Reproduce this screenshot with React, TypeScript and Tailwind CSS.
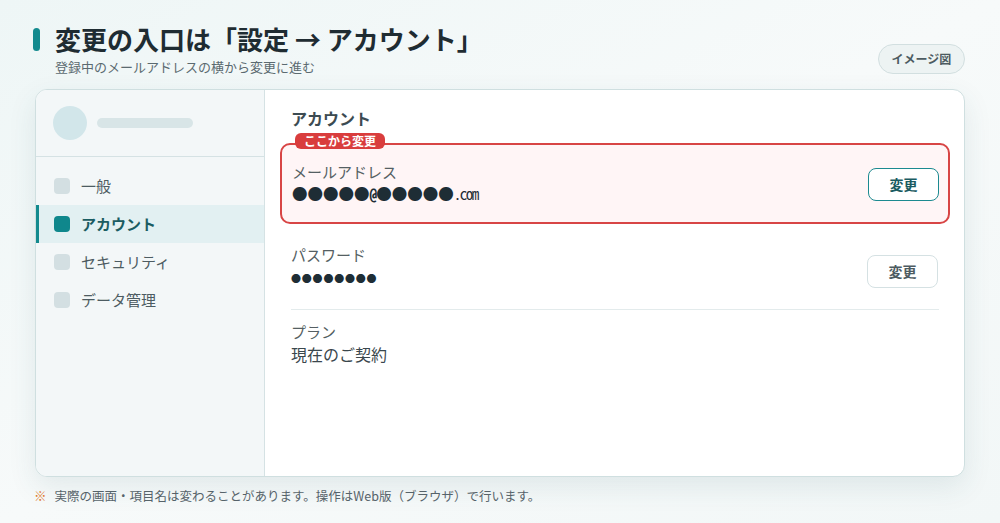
import React from "react";

const navItems = [
  { label: "一般", active: false },
  { label: "アカウント", active: true },
  { label: "セキュリティ", active: false },
  { label: "データ管理", active: false },
];

export default function App() {
  return (
    <div
      className="min-h-screen w-full bg-gradient-to-br from-[#eef6f6] via-[#f7fafa] to-[#f2f7f7] px-[35px] pt-[24px] text-[#2a3a40]"
      style={{ fontFamily: '"Noto Sans CJK JP", "Noto Sans", sans-serif' }}
    >
      {/* 見出し */}
      <div className="flex items-end justify-between">
        <div>
          <div className="flex items-center">
            <span className="-ml-[2px] mr-[15px] h-[23px] w-[7px] rounded-full bg-[#138a8e]"></span>
            <h1 className="text-[26px] font-bold leading-[30px] text-[#1f2c32]">
              変更の入口は「設定 → アカウント」
            </h1>
          </div>
          <p className="mt-[4px] pl-[20px] text-[13px] leading-[18px] text-[#5b6a70]">
            登録中のメールアドレスの横から変更に進む
          </p>
        </div>
        <div className="mb-[2px] flex h-[30px] w-[87px] items-center justify-center rounded-full border border-[#d2dfe0] bg-[#edf3f3] text-[12px] font-bold text-[#4c5b61]">
          イメージ図
        </div>
      </div>

      {/* 画面 */}
      <div className="mt-[13px] grid h-[388px] grid-cols-[229px_1fr] overflow-hidden rounded-[12px] border border-[#cfdfe0] bg-white shadow-[0_10px_28px_rgba(40,90,95,0.10)]">
        {/* サイドバー */}
        <div className="border-r border-[#d5e2e4] bg-[#f3f7f8]">
          <div className="flex items-center gap-[10px] border-b border-[#d5e2e4] px-[17px] py-[16px]">
            <span className="h-[34px] w-[34px] rounded-full bg-[#d2e6ea]"></span>
            <span className="h-[10px] w-[96px] rounded-full bg-[#d8e5e7]"></span>
          </div>
          <div className="pt-[10px]">
            {navItems.map((item) => (
              <div
                key={item.label}
                className={`flex h-[38px] items-center gap-[11px] border-l-[3px] pl-[15px] ${
                  item.active ? "border-[#138a8e] bg-[#e2f0f2]" : "border-transparent"
                }`}
              >
                <span
                  className={`h-[16px] w-[16px] rounded-[4px] ${
                    item.active ? "bg-[#0f878c]" : "bg-[#d3dfe2]"
                  }`}
                ></span>
                <span
                  className={`text-[15px] ${
                    item.active ? "font-bold text-[#1b5c62]" : "text-[#4d5c62]"
                  }`}
                >
                  {item.label}
                </span>
              </div>
            ))}
          </div>
        </div>

        {/* 本文 */}
        <div className="pl-[26px] pr-[25px] pt-[17px]">
          <h2 className="text-[16px] font-bold leading-[22px] text-[#3c4b52]">アカウント</h2>

          {/* メールアドレス */}
          <div className="relative -mx-[11px] mt-[14px] flex items-center justify-between rounded-[10px] border-2 border-[#d84545] bg-[#fff5f6] py-[17px] pl-[10px] pr-[9px]">
            <span className="absolute -top-[12px] left-[13px] rounded-[6px] bg-[#d93d3d] px-[9px] text-[12px] font-bold leading-[16px] text-white">
              ここから変更
            </span>
            <div>
              <div className="text-[15px] leading-[20px] text-[#555f63]">メールアドレス</div>
              <div
                className="text-[15.5px] font-bold leading-[22px] text-[#1e2d35]"
                style={{ fontFamily: '"Noto Sans Mono CJK JP", "Noto Sans CJK JP", monospace' }}
              >
                ●●●●●<span className="tracking-[-1px]">@</span>●●●●●
                <span className="text-[15px] font-normal tracking-[-1.5px]">.com</span>
              </div>
            </div>
            <button className="mt-[2px] flex h-[33px] w-[71px] items-center justify-center rounded-[8px] border-[1.5px] border-[#1c8a90] bg-white text-[14px] font-bold text-[#1a5b61]">
              変更
            </button>
          </div>

          {/* パスワード */}
          <div className="flex items-center justify-between border-b border-[#e3ebec] pb-[20px] pt-[21px]">
            <div>
              <div className="text-[15px] leading-[20px] text-[#555f63]">パスワード</div>
              <div className="mt-[4px] text-[10px] leading-[20px] tracking-[0.8px] text-[#1e2d35]">
                ●●●●●●●●
              </div>
            </div>
            <button className="mr-[1px] mt-[8px] flex h-[33px] w-[71px] items-center justify-center rounded-[8px] border border-[#d5e1e3] bg-white text-[14px] font-bold text-[#4d5b61]">
              変更
            </button>
          </div>

          {/* プラン */}
          <div className="pt-[12px]">
            <div className="text-[15px] leading-[20px] text-[#555f63]">プラン</div>
            <div className="text-[16px] leading-[24px] text-[#3a474d]">現在のご契約</div>
          </div>
        </div>
      </div>

      {/* 注記 */}
      <p className="mt-[10px] flex items-center gap-[8px] text-[12.5px] leading-[18px] text-[#56636a]">
        <span className="-ml-[1px] text-[#e07a2e]">※</span>
        実際の画面・項目名は変わることがあります。操作はWeb版（ブラウザ）で行います。
      </p>
    </div>
  );
}
